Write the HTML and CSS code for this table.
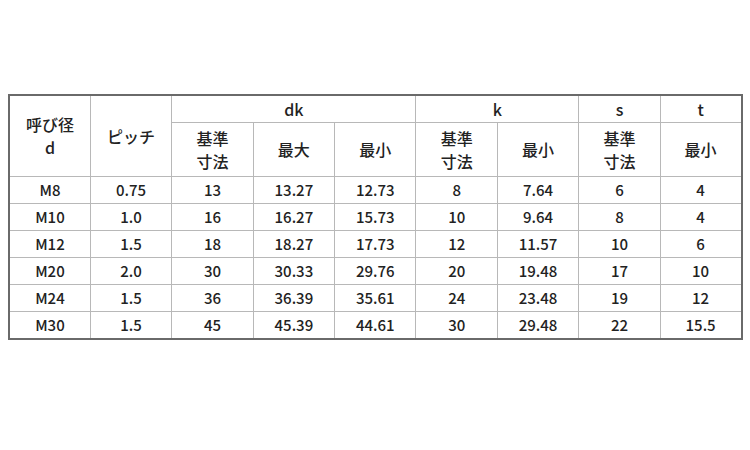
FILE: index.html
```html
<!DOCTYPE html>
<html lang="ja">
<head>
<meta charset="utf-8">
<link rel="stylesheet" href="styles.css">
</head>
<body>
<table class="spec">
  <colgroup>
    <col><col><col><col><col><col><col><col><col>
  </colgroup>
  <thead>
    <tr class="h1">
      <th rowspan="2">呼び径<br>d</th>
      <th rowspan="2">ピッチ</th>
      <th colspan="3">dk</th>
      <th colspan="2">k</th>
      <th>s</th>
      <th>t</th>
    </tr>
    <tr class="h2">
      <th>基準<br>寸法</th>
      <th>最大</th>
      <th>最小</th>
      <th>基準<br>寸法</th>
      <th>最小</th>
      <th>基準<br>寸法</th>
      <th>最小</th>
    </tr>
  </thead>
  <tbody>
    <tr><td>M8</td><td>0.75</td><td>13</td><td>13.27</td><td>12.73</td><td>8</td><td>7.64</td><td>6</td><td>4</td></tr>
    <tr><td>M10</td><td>1.0</td><td>16</td><td>16.27</td><td>15.73</td><td>10</td><td>9.64</td><td>8</td><td>4</td></tr>
    <tr><td>M12</td><td>1.5</td><td>18</td><td>18.27</td><td>17.73</td><td>12</td><td>11.57</td><td>10</td><td>6</td></tr>
    <tr><td>M20</td><td>2.0</td><td>30</td><td>30.33</td><td>29.76</td><td>20</td><td>19.48</td><td>17</td><td>10</td></tr>
    <tr><td>M24</td><td>1.5</td><td>36</td><td>36.39</td><td>35.61</td><td>24</td><td>23.48</td><td>19</td><td>12</td></tr>
    <tr><td>M30</td><td>1.5</td><td>45</td><td>45.39</td><td>44.61</td><td>30</td><td>29.48</td><td>22</td><td>15.5</td></tr>
  </tbody>
</table>
</body>
</html>
```

FILE: styles.css
```css
html, body {
  margin: 0;
  padding: 0;
  background: #ffffff;
}
body {
  padding: 94px 0 0 8px;
  font-family: "Noto Sans CJK JP", "Noto Sans", sans-serif;
  color: #222222;
}
.spec {
  border-collapse: collapse;
  table-layout: fixed;
  width: 733px;
  border: 2px solid #6a6a6a;
  font-size: 15px;
}
.spec col {
  width: 81.4px;
}
.spec th,
.spec td {
  border: 1px solid #b8b8b8;
  text-align: center;
  vertical-align: middle;
  padding: 0;
  font-weight: 500;
  line-height: 23px;
}
.spec th {
  font-size: 16px;
}
.spec .h1 th {
  height: 26px;
}
.spec .h2 th {
  height: 53px;
}
.spec td {
  height: 26px;
  line-height: 20px;
}
```
